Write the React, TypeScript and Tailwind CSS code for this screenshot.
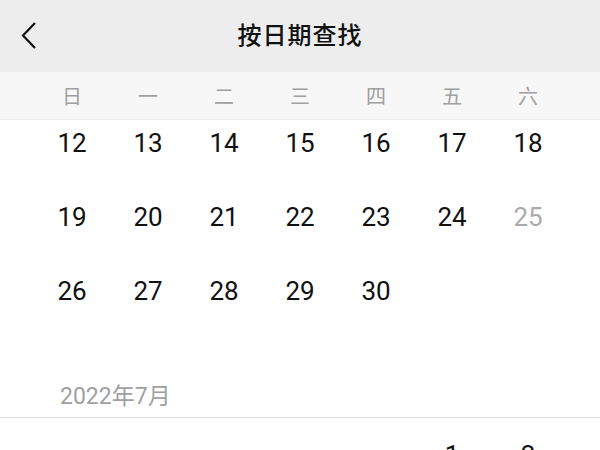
import React from "react";

const WEEK = ["日", "一", "二", "三", "四", "五", "六"];

type Day = { n: number | null; off?: boolean };

const JUNE: Day[][] = [
  [{ n: 12 }, { n: 13 }, { n: 14 }, { n: 15 }, { n: 16 }, { n: 17 }, { n: 18 }],
  [{ n: 19 }, { n: 20 }, { n: 21 }, { n: 22 }, { n: 23 }, { n: 24 }, { n: 25, off: true }],
  [{ n: 26 }, { n: 27 }, { n: 28 }, { n: 29 }, { n: 30 }, { n: null }, { n: null }],
];

const JULY: Day[][] = [
  [{ n: null }, { n: null }, { n: null }, { n: null }, { n: null }, { n: 1 }, { n: 2 }],
];

function Row({ days }: { days: Day[] }) {
  return (
    <div className="grid grid-cols-7 h-[74px] px-[34px] items-center">
      {days.map((d, i) => (
        <div
          key={i}
          className={`text-center text-[26px] leading-none ${d.off ? "text-[#ababab]" : "text-[#111]"}`}
        >
          {d.n ?? ""}
        </div>
      ))}
    </div>
  );
}

export default function App() {
  return (
    <div
      className="w-[600px] h-[450px] overflow-hidden flex flex-col bg-white"
      style={{ fontFamily: 'Roboto, "Noto Sans CJK SC", sans-serif' }}
    >
      {/* 헤더 */}
      <div className="relative h-[72px] shrink-0 bg-[#ededed] flex items-center justify-center">
        <svg className="absolute left-[18px] top-[19px]" width="24" height="34" viewBox="0 0 24 34">
          <path d="M17 4 L5 16.5 L17 29" fill="none" stroke="#111" strokeWidth="2.2" />
        </svg>
        <span className="text-[24px] font-medium text-[#111] tracking-[1px]">按日期查找</span>
      </div>

      {/* 요일 */}
      <div className="grid grid-cols-7 h-[48px] shrink-0 px-[34px] pt-[3px] items-center bg-[#f7f7f7] border-b border-[#ececec]">
        {WEEK.map((w) => (
          <div key={w} className="text-center text-[20px] text-[#a0a0a0]">{w}</div>
        ))}
      </div>

      {/* 달력 */}
      <div className="flex-1 overflow-hidden">
        <div className="-mt-[14px]">
          {JUNE.map((r, i) => <Row key={i} days={r} />)}
          <div className="h-[90px] flex items-end pb-[5px] pl-[60px] border-b border-[#e3e3e3]">
            <span className="text-[23px] leading-[30px] text-[#a0a0a0]">2022年7月</span>
          </div>
          {JULY.map((r, i) => <Row key={i} days={r} />)}
        </div>
      </div>
    </div>
  );
}
